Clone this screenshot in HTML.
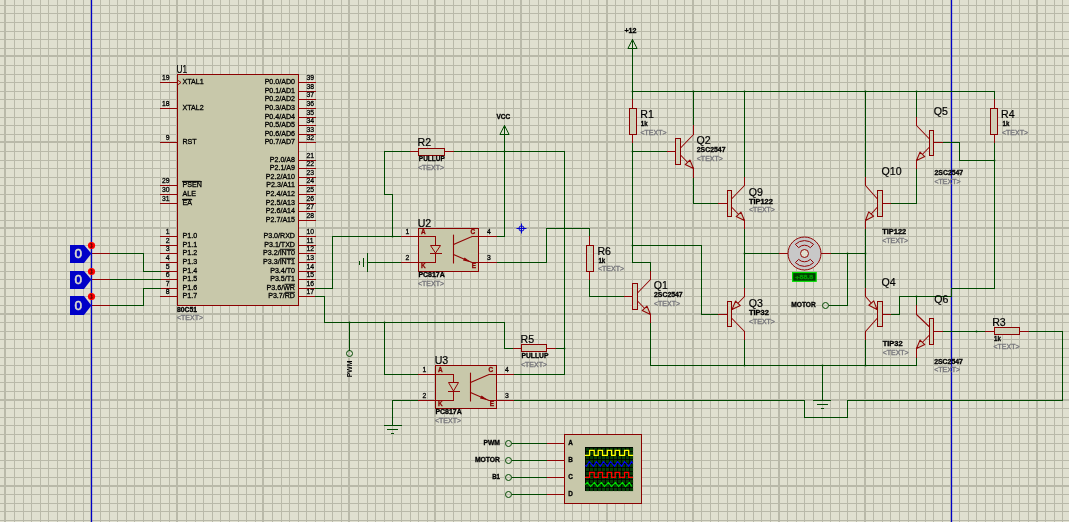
<!DOCTYPE html>
<html><head><meta charset="utf-8"><title>Schematic</title>
<style>html,body{margin:0;padding:0;background:#E0E0D0;overflow:hidden}svg{display:block}text{font-family:"Liberation Sans", Arial, sans-serif}</style>
</head><body>
<svg width="1069" height="522" viewBox="0 0 1069 522" font-family='"Liberation Sans", Arial, sans-serif'>
<defs><filter id="nf" x="0" y="0" width="100%" height="100%" filterUnits="userSpaceOnUse" color-interpolation-filters="sRGB"><feOffset dx="0" dy="0"/></filter></defs><g filter="url(#nf)">
<g shape-rendering="crispEdges">
<rect x="4" y="0" width="2" height="522" fill="#B9B9A9"/>
<rect x="14" y="0" width="1" height="522" fill="#B9B9A9"/>
<rect x="23" y="0" width="1" height="522" fill="#B9B9A9"/>
<rect x="31" y="0" width="1" height="522" fill="#B9B9A9"/>
<rect x="40" y="0" width="1" height="522" fill="#B9B9A9"/>
<rect x="48" y="0" width="1" height="522" fill="#B9B9A9"/>
<rect x="57" y="0" width="1" height="522" fill="#B9B9A9"/>
<rect x="66" y="0" width="1" height="522" fill="#B9B9A9"/>
<rect x="74" y="0" width="1" height="522" fill="#B9B9A9"/>
<rect x="83" y="0" width="1" height="522" fill="#B9B9A9"/>
<rect x="90" y="0" width="2" height="522" fill="#B9B9A9"/>
<rect x="100" y="0" width="1" height="522" fill="#B9B9A9"/>
<rect x="109" y="0" width="1" height="522" fill="#B9B9A9"/>
<rect x="117" y="0" width="1" height="522" fill="#B9B9A9"/>
<rect x="126" y="0" width="1" height="522" fill="#B9B9A9"/>
<rect x="134" y="0" width="1" height="522" fill="#B9B9A9"/>
<rect x="143" y="0" width="1" height="522" fill="#B9B9A9"/>
<rect x="152" y="0" width="1" height="522" fill="#B9B9A9"/>
<rect x="160" y="0" width="1" height="522" fill="#B9B9A9"/>
<rect x="169" y="0" width="1" height="522" fill="#B9B9A9"/>
<rect x="176" y="0" width="2" height="522" fill="#B9B9A9"/>
<rect x="186" y="0" width="1" height="522" fill="#B9B9A9"/>
<rect x="195" y="0" width="1" height="522" fill="#B9B9A9"/>
<rect x="203" y="0" width="1" height="522" fill="#B9B9A9"/>
<rect x="212" y="0" width="1" height="522" fill="#B9B9A9"/>
<rect x="220" y="0" width="1" height="522" fill="#B9B9A9"/>
<rect x="229" y="0" width="1" height="522" fill="#B9B9A9"/>
<rect x="238" y="0" width="1" height="522" fill="#B9B9A9"/>
<rect x="246" y="0" width="1" height="522" fill="#B9B9A9"/>
<rect x="255" y="0" width="1" height="522" fill="#B9B9A9"/>
<rect x="262" y="0" width="2" height="522" fill="#B9B9A9"/>
<rect x="272" y="0" width="1" height="522" fill="#B9B9A9"/>
<rect x="281" y="0" width="1" height="522" fill="#B9B9A9"/>
<rect x="289" y="0" width="1" height="522" fill="#B9B9A9"/>
<rect x="298" y="0" width="1" height="522" fill="#B9B9A9"/>
<rect x="306" y="0" width="1" height="522" fill="#B9B9A9"/>
<rect x="315" y="0" width="1" height="522" fill="#B9B9A9"/>
<rect x="324" y="0" width="1" height="522" fill="#B9B9A9"/>
<rect x="332" y="0" width="1" height="522" fill="#B9B9A9"/>
<rect x="341" y="0" width="1" height="522" fill="#B9B9A9"/>
<rect x="348" y="0" width="2" height="522" fill="#B9B9A9"/>
<rect x="358" y="0" width="1" height="522" fill="#B9B9A9"/>
<rect x="367" y="0" width="1" height="522" fill="#B9B9A9"/>
<rect x="375" y="0" width="1" height="522" fill="#B9B9A9"/>
<rect x="384" y="0" width="1" height="522" fill="#B9B9A9"/>
<rect x="392" y="0" width="1" height="522" fill="#B9B9A9"/>
<rect x="401" y="0" width="1" height="522" fill="#B9B9A9"/>
<rect x="410" y="0" width="1" height="522" fill="#B9B9A9"/>
<rect x="418" y="0" width="1" height="522" fill="#B9B9A9"/>
<rect x="427" y="0" width="1" height="522" fill="#B9B9A9"/>
<rect x="434" y="0" width="2" height="522" fill="#B9B9A9"/>
<rect x="444" y="0" width="1" height="522" fill="#B9B9A9"/>
<rect x="453" y="0" width="1" height="522" fill="#B9B9A9"/>
<rect x="461" y="0" width="1" height="522" fill="#B9B9A9"/>
<rect x="470" y="0" width="1" height="522" fill="#B9B9A9"/>
<rect x="478" y="0" width="1" height="522" fill="#B9B9A9"/>
<rect x="487" y="0" width="1" height="522" fill="#B9B9A9"/>
<rect x="496" y="0" width="1" height="522" fill="#B9B9A9"/>
<rect x="504" y="0" width="1" height="522" fill="#B9B9A9"/>
<rect x="513" y="0" width="1" height="522" fill="#B9B9A9"/>
<rect x="520" y="0" width="2" height="522" fill="#B9B9A9"/>
<rect x="529" y="0" width="1" height="522" fill="#B9B9A9"/>
<rect x="538" y="0" width="1" height="522" fill="#B9B9A9"/>
<rect x="546" y="0" width="1" height="522" fill="#B9B9A9"/>
<rect x="555" y="0" width="1" height="522" fill="#B9B9A9"/>
<rect x="564" y="0" width="1" height="522" fill="#B9B9A9"/>
<rect x="572" y="0" width="1" height="522" fill="#B9B9A9"/>
<rect x="581" y="0" width="1" height="522" fill="#B9B9A9"/>
<rect x="589" y="0" width="1" height="522" fill="#B9B9A9"/>
<rect x="598" y="0" width="1" height="522" fill="#B9B9A9"/>
<rect x="606" y="0" width="2" height="522" fill="#B9B9A9"/>
<rect x="615" y="0" width="1" height="522" fill="#B9B9A9"/>
<rect x="624" y="0" width="1" height="522" fill="#B9B9A9"/>
<rect x="632" y="0" width="1" height="522" fill="#B9B9A9"/>
<rect x="641" y="0" width="1" height="522" fill="#B9B9A9"/>
<rect x="650" y="0" width="1" height="522" fill="#B9B9A9"/>
<rect x="658" y="0" width="1" height="522" fill="#B9B9A9"/>
<rect x="667" y="0" width="1" height="522" fill="#B9B9A9"/>
<rect x="675" y="0" width="1" height="522" fill="#B9B9A9"/>
<rect x="684" y="0" width="1" height="522" fill="#B9B9A9"/>
<rect x="692" y="0" width="2" height="522" fill="#B9B9A9"/>
<rect x="701" y="0" width="1" height="522" fill="#B9B9A9"/>
<rect x="710" y="0" width="1" height="522" fill="#B9B9A9"/>
<rect x="718" y="0" width="1" height="522" fill="#B9B9A9"/>
<rect x="727" y="0" width="1" height="522" fill="#B9B9A9"/>
<rect x="736" y="0" width="1" height="522" fill="#B9B9A9"/>
<rect x="744" y="0" width="1" height="522" fill="#B9B9A9"/>
<rect x="753" y="0" width="1" height="522" fill="#B9B9A9"/>
<rect x="761" y="0" width="1" height="522" fill="#B9B9A9"/>
<rect x="770" y="0" width="1" height="522" fill="#B9B9A9"/>
<rect x="778" y="0" width="2" height="522" fill="#B9B9A9"/>
<rect x="787" y="0" width="1" height="522" fill="#B9B9A9"/>
<rect x="796" y="0" width="1" height="522" fill="#B9B9A9"/>
<rect x="804" y="0" width="1" height="522" fill="#B9B9A9"/>
<rect x="813" y="0" width="1" height="522" fill="#B9B9A9"/>
<rect x="822" y="0" width="1" height="522" fill="#B9B9A9"/>
<rect x="830" y="0" width="1" height="522" fill="#B9B9A9"/>
<rect x="839" y="0" width="1" height="522" fill="#B9B9A9"/>
<rect x="847" y="0" width="1" height="522" fill="#B9B9A9"/>
<rect x="856" y="0" width="1" height="522" fill="#B9B9A9"/>
<rect x="864" y="0" width="2" height="522" fill="#B9B9A9"/>
<rect x="873" y="0" width="1" height="522" fill="#B9B9A9"/>
<rect x="882" y="0" width="1" height="522" fill="#B9B9A9"/>
<rect x="890" y="0" width="1" height="522" fill="#B9B9A9"/>
<rect x="899" y="0" width="1" height="522" fill="#B9B9A9"/>
<rect x="908" y="0" width="1" height="522" fill="#B9B9A9"/>
<rect x="916" y="0" width="1" height="522" fill="#B9B9A9"/>
<rect x="925" y="0" width="1" height="522" fill="#B9B9A9"/>
<rect x="933" y="0" width="1" height="522" fill="#B9B9A9"/>
<rect x="942" y="0" width="1" height="522" fill="#B9B9A9"/>
<rect x="950" y="0" width="2" height="522" fill="#B9B9A9"/>
<rect x="959" y="0" width="1" height="522" fill="#B9B9A9"/>
<rect x="968" y="0" width="1" height="522" fill="#B9B9A9"/>
<rect x="976" y="0" width="1" height="522" fill="#B9B9A9"/>
<rect x="985" y="0" width="1" height="522" fill="#B9B9A9"/>
<rect x="994" y="0" width="1" height="522" fill="#B9B9A9"/>
<rect x="1002" y="0" width="1" height="522" fill="#B9B9A9"/>
<rect x="1011" y="0" width="1" height="522" fill="#B9B9A9"/>
<rect x="1019" y="0" width="1" height="522" fill="#B9B9A9"/>
<rect x="1028" y="0" width="1" height="522" fill="#B9B9A9"/>
<rect x="1036" y="0" width="2" height="522" fill="#B9B9A9"/>
<rect x="1045" y="0" width="1" height="522" fill="#B9B9A9"/>
<rect x="1054" y="0" width="1" height="522" fill="#B9B9A9"/>
<rect x="1062" y="0" width="1" height="522" fill="#B9B9A9"/>
<rect x="0" y="5" width="1069" height="1" fill="#B9B9A9"/>
<rect x="0" y="13" width="1069" height="1" fill="#B9B9A9"/>
<rect x="0" y="22" width="1069" height="1" fill="#B9B9A9"/>
<rect x="0" y="31" width="1069" height="1" fill="#B9B9A9"/>
<rect x="0" y="39" width="1069" height="1" fill="#B9B9A9"/>
<rect x="0" y="48" width="1069" height="1" fill="#B9B9A9"/>
<rect x="0" y="55" width="1069" height="2" fill="#B9B9A9"/>
<rect x="0" y="65" width="1069" height="1" fill="#B9B9A9"/>
<rect x="0" y="74" width="1069" height="1" fill="#B9B9A9"/>
<rect x="0" y="82" width="1069" height="1" fill="#B9B9A9"/>
<rect x="0" y="91" width="1069" height="1" fill="#B9B9A9"/>
<rect x="0" y="99" width="1069" height="1" fill="#B9B9A9"/>
<rect x="0" y="108" width="1069" height="1" fill="#B9B9A9"/>
<rect x="0" y="117" width="1069" height="1" fill="#B9B9A9"/>
<rect x="0" y="125" width="1069" height="1" fill="#B9B9A9"/>
<rect x="0" y="134" width="1069" height="1" fill="#B9B9A9"/>
<rect x="0" y="141" width="1069" height="2" fill="#B9B9A9"/>
<rect x="0" y="151" width="1069" height="1" fill="#B9B9A9"/>
<rect x="0" y="160" width="1069" height="1" fill="#B9B9A9"/>
<rect x="0" y="168" width="1069" height="1" fill="#B9B9A9"/>
<rect x="0" y="177" width="1069" height="1" fill="#B9B9A9"/>
<rect x="0" y="185" width="1069" height="1" fill="#B9B9A9"/>
<rect x="0" y="194" width="1069" height="1" fill="#B9B9A9"/>
<rect x="0" y="203" width="1069" height="1" fill="#B9B9A9"/>
<rect x="0" y="211" width="1069" height="1" fill="#B9B9A9"/>
<rect x="0" y="220" width="1069" height="1" fill="#B9B9A9"/>
<rect x="0" y="227" width="1069" height="2" fill="#B9B9A9"/>
<rect x="0" y="236" width="1069" height="1" fill="#B9B9A9"/>
<rect x="0" y="245" width="1069" height="1" fill="#B9B9A9"/>
<rect x="0" y="253" width="1069" height="1" fill="#B9B9A9"/>
<rect x="0" y="262" width="1069" height="1" fill="#B9B9A9"/>
<rect x="0" y="271" width="1069" height="1" fill="#B9B9A9"/>
<rect x="0" y="279" width="1069" height="1" fill="#B9B9A9"/>
<rect x="0" y="288" width="1069" height="1" fill="#B9B9A9"/>
<rect x="0" y="296" width="1069" height="1" fill="#B9B9A9"/>
<rect x="0" y="305" width="1069" height="1" fill="#B9B9A9"/>
<rect x="0" y="313" width="1069" height="2" fill="#B9B9A9"/>
<rect x="0" y="322" width="1069" height="1" fill="#B9B9A9"/>
<rect x="0" y="331" width="1069" height="1" fill="#B9B9A9"/>
<rect x="0" y="339" width="1069" height="1" fill="#B9B9A9"/>
<rect x="0" y="348" width="1069" height="1" fill="#B9B9A9"/>
<rect x="0" y="357" width="1069" height="1" fill="#B9B9A9"/>
<rect x="0" y="365" width="1069" height="1" fill="#B9B9A9"/>
<rect x="0" y="374" width="1069" height="1" fill="#B9B9A9"/>
<rect x="0" y="382" width="1069" height="1" fill="#B9B9A9"/>
<rect x="0" y="391" width="1069" height="1" fill="#B9B9A9"/>
<rect x="0" y="399" width="1069" height="2" fill="#B9B9A9"/>
<rect x="0" y="408" width="1069" height="1" fill="#B9B9A9"/>
<rect x="0" y="417" width="1069" height="1" fill="#B9B9A9"/>
<rect x="0" y="425" width="1069" height="1" fill="#B9B9A9"/>
<rect x="0" y="434" width="1069" height="1" fill="#B9B9A9"/>
<rect x="0" y="443" width="1069" height="1" fill="#B9B9A9"/>
<rect x="0" y="451" width="1069" height="1" fill="#B9B9A9"/>
<rect x="0" y="460" width="1069" height="1" fill="#B9B9A9"/>
<rect x="0" y="468" width="1069" height="1" fill="#B9B9A9"/>
<rect x="0" y="477" width="1069" height="1" fill="#B9B9A9"/>
<rect x="0" y="485" width="1069" height="2" fill="#B9B9A9"/>
<rect x="0" y="494" width="1069" height="1" fill="#B9B9A9"/>
<rect x="0" y="503" width="1069" height="1" fill="#B9B9A9"/>
<rect x="0" y="511" width="1069" height="1" fill="#B9B9A9"/>
<rect x="0" y="520" width="1069" height="1" fill="#B9B9A9"/>
</g>
<rect x="90.9" y="0" width="1.25" height="522" fill="#0000C8"/>
<rect x="950.9" y="0" width="1.25" height="522" fill="#0000C8"/>
<rect x="177.5" y="74.5" width="121" height="231" fill="#C8C8AA" stroke="#8A0000" stroke-width="1" shape-rendering="crispEdges"/>
<rect x="160" y="82" width="18" height="1" fill="#900404"/>
<text x="169.5" y="79.8" font-size="6.8" font-weight="normal" fill="#000000" stroke="#000000" stroke-width="0.3" text-anchor="end">19</text>
<text x="182.5" y="84.3" font-size="7.1" font-weight="normal" fill="#000000" stroke="#000000" stroke-width="0.3" text-anchor="start">XTAL1</text>
<rect x="160" y="108" width="18" height="1" fill="#900404"/>
<text x="169.5" y="105.8" font-size="6.8" font-weight="normal" fill="#000000" stroke="#000000" stroke-width="0.3" text-anchor="end">18</text>
<text x="182.5" y="110.3" font-size="7.1" font-weight="normal" fill="#000000" stroke="#000000" stroke-width="0.3" text-anchor="start">XTAL2</text>
<rect x="160" y="142" width="18" height="1" fill="#900404"/>
<text x="169.5" y="139.8" font-size="6.8" font-weight="normal" fill="#000000" stroke="#000000" stroke-width="0.3" text-anchor="end">9</text>
<text x="182.5" y="144.3" font-size="7.1" font-weight="normal" fill="#000000" stroke="#000000" stroke-width="0.3" text-anchor="start">RST</text>
<rect x="160" y="185" width="18" height="1" fill="#900404"/>
<text x="169.5" y="182.8" font-size="6.8" font-weight="normal" fill="#000000" stroke="#000000" stroke-width="0.3" text-anchor="end">29</text>
<text x="182.5" y="187.3" font-size="7.1" font-weight="normal" fill="#000000" stroke="#000000" stroke-width="0.3" text-anchor="start" text-decoration="overline">PSEN</text>
<rect x="182.5" y="180.8" width="18" height="0.9" fill="#000000"/>
<rect x="160" y="194" width="18" height="1" fill="#900404"/>
<text x="169.5" y="191.8" font-size="6.8" font-weight="normal" fill="#000000" stroke="#000000" stroke-width="0.3" text-anchor="end">30</text>
<text x="182.5" y="196.3" font-size="7.1" font-weight="normal" fill="#000000" stroke="#000000" stroke-width="0.3" text-anchor="start">ALE</text>
<rect x="160" y="203" width="18" height="1" fill="#900404"/>
<text x="169.5" y="200.8" font-size="6.8" font-weight="normal" fill="#000000" stroke="#000000" stroke-width="0.3" text-anchor="end">31</text>
<text x="182.5" y="205.3" font-size="7.1" font-weight="normal" fill="#000000" stroke="#000000" stroke-width="0.3" text-anchor="start" text-decoration="overline">EA</text>
<rect x="182.5" y="198.8" width="9" height="0.9" fill="#000000"/>
<rect x="160" y="236" width="18" height="1" fill="#900404"/>
<text x="169.5" y="233.8" font-size="6.8" font-weight="normal" fill="#000000" stroke="#000000" stroke-width="0.3" text-anchor="end">1</text>
<text x="182.5" y="238.3" font-size="7.1" font-weight="normal" fill="#000000" stroke="#000000" stroke-width="0.3" text-anchor="start">P1.0</text>
<rect x="160" y="245" width="18" height="1" fill="#900404"/>
<text x="169.5" y="242.8" font-size="6.8" font-weight="normal" fill="#000000" stroke="#000000" stroke-width="0.3" text-anchor="end">2</text>
<text x="182.5" y="247.3" font-size="7.1" font-weight="normal" fill="#000000" stroke="#000000" stroke-width="0.3" text-anchor="start">P1.1</text>
<rect x="160" y="253" width="18" height="1" fill="#900404"/>
<text x="169.5" y="250.8" font-size="6.8" font-weight="normal" fill="#000000" stroke="#000000" stroke-width="0.3" text-anchor="end">3</text>
<text x="182.5" y="255.3" font-size="7.1" font-weight="normal" fill="#000000" stroke="#000000" stroke-width="0.3" text-anchor="start">P1.2</text>
<rect x="160" y="262" width="18" height="1" fill="#900404"/>
<text x="169.5" y="259.8" font-size="6.8" font-weight="normal" fill="#000000" stroke="#000000" stroke-width="0.3" text-anchor="end">4</text>
<text x="182.5" y="264.3" font-size="7.1" font-weight="normal" fill="#000000" stroke="#000000" stroke-width="0.3" text-anchor="start">P1.3</text>
<rect x="160" y="271" width="18" height="1" fill="#900404"/>
<text x="169.5" y="268.8" font-size="6.8" font-weight="normal" fill="#000000" stroke="#000000" stroke-width="0.3" text-anchor="end">5</text>
<text x="182.5" y="273.3" font-size="7.1" font-weight="normal" fill="#000000" stroke="#000000" stroke-width="0.3" text-anchor="start">P1.4</text>
<rect x="160" y="279" width="18" height="1" fill="#900404"/>
<text x="169.5" y="276.8" font-size="6.8" font-weight="normal" fill="#000000" stroke="#000000" stroke-width="0.3" text-anchor="end">6</text>
<text x="182.5" y="281.3" font-size="7.1" font-weight="normal" fill="#000000" stroke="#000000" stroke-width="0.3" text-anchor="start">P1.5</text>
<rect x="160" y="288" width="18" height="1" fill="#900404"/>
<text x="169.5" y="285.8" font-size="6.8" font-weight="normal" fill="#000000" stroke="#000000" stroke-width="0.3" text-anchor="end">7</text>
<text x="182.5" y="290.3" font-size="7.1" font-weight="normal" fill="#000000" stroke="#000000" stroke-width="0.3" text-anchor="start">P1.6</text>
<rect x="160" y="296" width="18" height="1" fill="#900404"/>
<text x="169.5" y="293.8" font-size="6.8" font-weight="normal" fill="#000000" stroke="#000000" stroke-width="0.3" text-anchor="end">8</text>
<text x="182.5" y="298.3" font-size="7.1" font-weight="normal" fill="#000000" stroke="#000000" stroke-width="0.3" text-anchor="start">P1.7</text>
<polygon points="177.5,80.0 181,82.5 177.5,85.0" fill="#C8C8AA" stroke="#8A0000" stroke-width="0.9"/>
<rect x="298" y="82" width="18" height="1" fill="#900404"/>
<text x="306.5" y="79.8" font-size="6.8" font-weight="normal" fill="#000000" stroke="#000000" stroke-width="0.3" text-anchor="start">39</text>
<text x="295" y="84.3" font-size="7.1" font-weight="normal" fill="#000000" stroke="#000000" stroke-width="0.3" text-anchor="end">P0.0/AD0</text>
<rect x="298" y="91" width="18" height="1" fill="#900404"/>
<text x="306.5" y="88.8" font-size="6.8" font-weight="normal" fill="#000000" stroke="#000000" stroke-width="0.3" text-anchor="start">38</text>
<text x="295" y="93.3" font-size="7.1" font-weight="normal" fill="#000000" stroke="#000000" stroke-width="0.3" text-anchor="end">P0.1/AD1</text>
<rect x="298" y="99" width="18" height="1" fill="#900404"/>
<text x="306.5" y="96.8" font-size="6.8" font-weight="normal" fill="#000000" stroke="#000000" stroke-width="0.3" text-anchor="start">37</text>
<text x="295" y="101.3" font-size="7.1" font-weight="normal" fill="#000000" stroke="#000000" stroke-width="0.3" text-anchor="end">P0.2/AD2</text>
<rect x="298" y="108" width="18" height="1" fill="#900404"/>
<text x="306.5" y="105.8" font-size="6.8" font-weight="normal" fill="#000000" stroke="#000000" stroke-width="0.3" text-anchor="start">36</text>
<text x="295" y="110.3" font-size="7.1" font-weight="normal" fill="#000000" stroke="#000000" stroke-width="0.3" text-anchor="end">P0.3/AD3</text>
<rect x="298" y="117" width="18" height="1" fill="#900404"/>
<text x="306.5" y="114.8" font-size="6.8" font-weight="normal" fill="#000000" stroke="#000000" stroke-width="0.3" text-anchor="start">35</text>
<text x="295" y="119.3" font-size="7.1" font-weight="normal" fill="#000000" stroke="#000000" stroke-width="0.3" text-anchor="end">P0.4/AD4</text>
<rect x="298" y="125" width="18" height="1" fill="#900404"/>
<text x="306.5" y="122.8" font-size="6.8" font-weight="normal" fill="#000000" stroke="#000000" stroke-width="0.3" text-anchor="start">34</text>
<text x="295" y="127.3" font-size="7.1" font-weight="normal" fill="#000000" stroke="#000000" stroke-width="0.3" text-anchor="end">P0.5/AD5</text>
<rect x="298" y="134" width="18" height="1" fill="#900404"/>
<text x="306.5" y="131.8" font-size="6.8" font-weight="normal" fill="#000000" stroke="#000000" stroke-width="0.3" text-anchor="start">33</text>
<text x="295" y="136.3" font-size="7.1" font-weight="normal" fill="#000000" stroke="#000000" stroke-width="0.3" text-anchor="end">P0.6/AD6</text>
<rect x="298" y="142" width="18" height="1" fill="#900404"/>
<text x="306.5" y="139.8" font-size="6.8" font-weight="normal" fill="#000000" stroke="#000000" stroke-width="0.3" text-anchor="start">32</text>
<text x="295" y="144.3" font-size="7.1" font-weight="normal" fill="#000000" stroke="#000000" stroke-width="0.3" text-anchor="end">P0.7/AD7</text>
<rect x="298" y="160" width="18" height="1" fill="#900404"/>
<text x="306.5" y="157.8" font-size="6.8" font-weight="normal" fill="#000000" stroke="#000000" stroke-width="0.3" text-anchor="start">21</text>
<text x="295" y="162.3" font-size="7.1" font-weight="normal" fill="#000000" stroke="#000000" stroke-width="0.3" text-anchor="end">P2.0/A8</text>
<rect x="298" y="168" width="18" height="1" fill="#900404"/>
<text x="306.5" y="165.8" font-size="6.8" font-weight="normal" fill="#000000" stroke="#000000" stroke-width="0.3" text-anchor="start">22</text>
<text x="295" y="170.3" font-size="7.1" font-weight="normal" fill="#000000" stroke="#000000" stroke-width="0.3" text-anchor="end">P2.1/A9</text>
<rect x="298" y="177" width="18" height="1" fill="#900404"/>
<text x="306.5" y="174.8" font-size="6.8" font-weight="normal" fill="#000000" stroke="#000000" stroke-width="0.3" text-anchor="start">23</text>
<text x="295" y="179.3" font-size="7.1" font-weight="normal" fill="#000000" stroke="#000000" stroke-width="0.3" text-anchor="end">P2.2/A10</text>
<rect x="298" y="185" width="18" height="1" fill="#900404"/>
<text x="306.5" y="182.8" font-size="6.8" font-weight="normal" fill="#000000" stroke="#000000" stroke-width="0.3" text-anchor="start">24</text>
<text x="295" y="187.3" font-size="7.1" font-weight="normal" fill="#000000" stroke="#000000" stroke-width="0.3" text-anchor="end">P2.3/A11</text>
<rect x="298" y="194" width="18" height="1" fill="#900404"/>
<text x="306.5" y="191.8" font-size="6.8" font-weight="normal" fill="#000000" stroke="#000000" stroke-width="0.3" text-anchor="start">25</text>
<text x="295" y="196.3" font-size="7.1" font-weight="normal" fill="#000000" stroke="#000000" stroke-width="0.3" text-anchor="end">P2.4/A12</text>
<rect x="298" y="203" width="18" height="1" fill="#900404"/>
<text x="306.5" y="200.8" font-size="6.8" font-weight="normal" fill="#000000" stroke="#000000" stroke-width="0.3" text-anchor="start">26</text>
<text x="295" y="205.3" font-size="7.1" font-weight="normal" fill="#000000" stroke="#000000" stroke-width="0.3" text-anchor="end">P2.5/A13</text>
<rect x="298" y="211" width="18" height="1" fill="#900404"/>
<text x="306.5" y="208.8" font-size="6.8" font-weight="normal" fill="#000000" stroke="#000000" stroke-width="0.3" text-anchor="start">27</text>
<text x="295" y="213.3" font-size="7.1" font-weight="normal" fill="#000000" stroke="#000000" stroke-width="0.3" text-anchor="end">P2.6/A14</text>
<rect x="298" y="220" width="18" height="1" fill="#900404"/>
<text x="306.5" y="217.8" font-size="6.8" font-weight="normal" fill="#000000" stroke="#000000" stroke-width="0.3" text-anchor="start">28</text>
<text x="295" y="222.3" font-size="7.1" font-weight="normal" fill="#000000" stroke="#000000" stroke-width="0.3" text-anchor="end">P2.7/A15</text>
<rect x="298" y="236" width="18" height="1" fill="#900404"/>
<text x="306.5" y="233.8" font-size="6.8" font-weight="normal" fill="#000000" stroke="#000000" stroke-width="0.3" text-anchor="start">10</text>
<text x="295" y="238.3" font-size="7.1" font-weight="normal" fill="#000000" stroke="#000000" stroke-width="0.3" text-anchor="end">P3.0/RXD</text>
<rect x="298" y="245" width="18" height="1" fill="#900404"/>
<text x="306.5" y="242.8" font-size="6.8" font-weight="normal" fill="#000000" stroke="#000000" stroke-width="0.3" text-anchor="start">11</text>
<text x="295" y="247.3" font-size="7.1" font-weight="normal" fill="#000000" stroke="#000000" stroke-width="0.3" text-anchor="end">P3.1/TXD</text>
<rect x="298" y="253" width="18" height="1" fill="#900404"/>
<text x="306.5" y="250.8" font-size="6.8" font-weight="normal" fill="#000000" stroke="#000000" stroke-width="0.3" text-anchor="start">12</text>
<text x="295" y="255.3" font-size="7.1" font-weight="normal" fill="#000000" stroke="#000000" stroke-width="0.3" text-anchor="end">P3.2/INT0</text>
<rect x="280" y="248.8" width="15" height="0.9" fill="#000000"/>
<rect x="298" y="262" width="18" height="1" fill="#900404"/>
<text x="306.5" y="259.8" font-size="6.8" font-weight="normal" fill="#000000" stroke="#000000" stroke-width="0.3" text-anchor="start">13</text>
<text x="295" y="264.3" font-size="7.1" font-weight="normal" fill="#000000" stroke="#000000" stroke-width="0.3" text-anchor="end">P3.3/INT1</text>
<rect x="280" y="257.8" width="15" height="0.9" fill="#000000"/>
<rect x="298" y="271" width="18" height="1" fill="#900404"/>
<text x="306.5" y="268.8" font-size="6.8" font-weight="normal" fill="#000000" stroke="#000000" stroke-width="0.3" text-anchor="start">14</text>
<text x="295" y="273.3" font-size="7.1" font-weight="normal" fill="#000000" stroke="#000000" stroke-width="0.3" text-anchor="end">P3.4/T0</text>
<rect x="298" y="279" width="18" height="1" fill="#900404"/>
<text x="306.5" y="276.8" font-size="6.8" font-weight="normal" fill="#000000" stroke="#000000" stroke-width="0.3" text-anchor="start">15</text>
<text x="295" y="281.3" font-size="7.1" font-weight="normal" fill="#000000" stroke="#000000" stroke-width="0.3" text-anchor="end">P3.5/T1</text>
<rect x="298" y="288" width="18" height="1" fill="#900404"/>
<text x="306.5" y="285.8" font-size="6.8" font-weight="normal" fill="#000000" stroke="#000000" stroke-width="0.3" text-anchor="start">16</text>
<text x="295" y="290.3" font-size="7.1" font-weight="normal" fill="#000000" stroke="#000000" stroke-width="0.3" text-anchor="end">P3.6/WR</text>
<rect x="284.5" y="283.8" width="10.5" height="0.9" fill="#000000"/>
<rect x="298" y="296" width="18" height="1" fill="#900404"/>
<text x="306.5" y="293.8" font-size="6.8" font-weight="normal" fill="#000000" stroke="#000000" stroke-width="0.3" text-anchor="start">17</text>
<text x="295" y="298.3" font-size="7.1" font-weight="normal" fill="#000000" stroke="#000000" stroke-width="0.3" text-anchor="end">P3.7/RD</text>
<rect x="285" y="291.8" width="10" height="0.9" fill="#000000"/>
<text x="176.6" y="72.6" font-size="10.6" font-weight="normal" fill="#000000" stroke="#000000" stroke-width="0.2" text-anchor="start" textLength="10.6" lengthAdjust="spacingAndGlyphs">U1</text>
<text x="177" y="311.8" font-size="6.4" font-weight="bold" fill="#000000" stroke="#000000" stroke-width="0.3" text-anchor="start" textLength="20" lengthAdjust="spacingAndGlyphs">80C51</text>
<text x="177" y="319.9" font-size="6.4" font-weight="normal" fill="#74747A" stroke="#74747A" stroke-width="0.3" text-anchor="start" textLength="26" lengthAdjust="spacingAndGlyphs">&lt;TEXT&gt;</text>
<polygon points="70,245 84,245 91.4,253.5 84,263 70,263" fill="#0000C8"/>
<text x="78.3" y="258.4" font-size="13.5" font-weight="normal" fill="#E0E0D0" stroke="#E0E0D0" stroke-width="0.5" text-anchor="middle">0</text>
<rect x="92" y="253" width="18" height="1" fill="#900404"/>
<rect x="110" y="253" width="34" height="1" fill="#004800"/>
<rect x="143" y="253" width="1" height="19" fill="#004800"/>
<rect x="143" y="271" width="18" height="1" fill="#004800"/>
<circle cx="91.5" cy="245.5" r="3.6" fill="#FF0000"/>
<path d="M90.3,243.8 l1.6,0 l-0.2,1.6 l0.4,1.8 l-1.8,0" fill="none" stroke="#300000" stroke-width="0.9"/>
<polygon points="70,271 84,271 91.4,279.5 84,289 70,289" fill="#0000C8"/>
<text x="78.3" y="284.4" font-size="13.5" font-weight="normal" fill="#E0E0D0" stroke="#E0E0D0" stroke-width="0.5" text-anchor="middle">0</text>
<rect x="92" y="279" width="18" height="1" fill="#900404"/>
<rect x="110" y="279" width="51" height="1" fill="#004800"/>
<circle cx="91.5" cy="271.5" r="3.6" fill="#FF0000"/>
<path d="M90.3,269.8 l1.6,0 l-0.2,1.6 l0.4,1.8 l-1.8,0" fill="none" stroke="#300000" stroke-width="0.9"/>
<polygon points="70,296 84,296 91.4,305.5 84,315 70,315" fill="#0000C8"/>
<text x="78.3" y="310.4" font-size="13.5" font-weight="normal" fill="#E0E0D0" stroke="#E0E0D0" stroke-width="0.5" text-anchor="middle">0</text>
<rect x="92" y="305" width="18" height="1" fill="#900404"/>
<rect x="110" y="305" width="34" height="1" fill="#004800"/>
<rect x="143" y="288" width="1" height="18" fill="#004800"/>
<rect x="143" y="288" width="18" height="1" fill="#004800"/>
<circle cx="91.5" cy="296.5" r="3.6" fill="#FF0000"/>
<path d="M90.3,294.8 l1.6,0 l-0.2,1.6 l0.4,1.8 l-1.8,0" fill="none" stroke="#300000" stroke-width="0.9"/>
<rect x="315" y="288" width="18" height="1" fill="#004800"/>
<rect x="332" y="236" width="1" height="53" fill="#004800"/>
<rect x="332" y="236" width="70" height="1" fill="#004800"/>
<rect x="392" y="194" width="1" height="43" fill="#004800"/>
<rect x="384" y="194" width="9" height="1" fill="#004800"/>
<rect x="384" y="151" width="1" height="44" fill="#004800"/>
<rect x="384" y="151" width="27" height="1" fill="#004800"/>
<rect x="453" y="151" width="112" height="1" fill="#004800"/>
<rect x="564" y="151" width="1" height="224" fill="#004800"/>
<rect x="513" y="374" width="52" height="1" fill="#004800"/>
<rect x="504" y="134" width="1" height="103" fill="#004800"/>
<rect x="496" y="236" width="9" height="1" fill="#004800"/>
<rect x="555" y="348" width="10" height="1" fill="#004800"/>
<rect x="496" y="262" width="51" height="1" fill="#004800"/>
<rect x="546" y="228" width="1" height="35" fill="#004800"/>
<rect x="546" y="228" width="44" height="1" fill="#004800"/>
<rect x="589" y="228" width="1" height="9" fill="#004800"/>
<rect x="589" y="279" width="1" height="18" fill="#004800"/>
<rect x="589" y="296" width="36" height="1" fill="#004800"/>
<rect x="367" y="262" width="35" height="1" fill="#004800"/>
<rect x="315" y="296" width="10" height="1" fill="#004800"/>
<rect x="324" y="296" width="1" height="27" fill="#004800"/>
<rect x="324" y="322" width="181" height="1" fill="#004800"/>
<rect x="504" y="322" width="1" height="27" fill="#004800"/>
<rect x="504" y="348" width="10" height="1" fill="#004800"/>
<rect x="349" y="322" width="1" height="29" fill="#004800"/>
<rect x="384" y="322" width="1" height="53" fill="#004800"/>
<rect x="384" y="374" width="35" height="1" fill="#004800"/>
<rect x="392" y="400" width="27" height="1" fill="#004800"/>
<rect x="392" y="400" width="1" height="26" fill="#004800"/>
<rect x="513" y="400" width="292" height="1" fill="#004800"/>
<rect x="804" y="400" width="1" height="18" fill="#004800"/>
<rect x="804" y="417" width="44" height="1" fill="#004800"/>
<rect x="847" y="400" width="1" height="18" fill="#004800"/>
<rect x="847" y="400" width="216" height="1" fill="#004800"/>
<rect x="1062" y="331" width="1" height="70" fill="#004800"/>
<rect x="1028" y="331" width="35" height="1" fill="#004800"/>
<rect x="942" y="331" width="44" height="1" fill="#004800"/>
<rect x="632" y="48" width="1" height="52" fill="#004800"/>
<rect x="632" y="91" width="363" height="1" fill="#004800"/>
<rect x="994" y="91" width="1" height="9" fill="#004800"/>
<rect x="632" y="142" width="1" height="121" fill="#004800"/>
<rect x="632" y="262" width="19" height="1" fill="#004800"/>
<rect x="650" y="262" width="1" height="10" fill="#004800"/>
<rect x="632" y="151" width="36" height="1" fill="#004800"/>
<rect x="632" y="245" width="70" height="1" fill="#004800"/>
<rect x="701" y="245" width="1" height="70" fill="#004800"/>
<rect x="701" y="314" width="18" height="1" fill="#004800"/>
<rect x="693" y="91" width="1" height="35" fill="#004800"/>
<rect x="693" y="177" width="1" height="27" fill="#004800"/>
<rect x="693" y="203" width="26" height="1" fill="#004800"/>
<rect x="744" y="91" width="1" height="87" fill="#004800"/>
<rect x="744" y="228" width="1" height="61" fill="#004800"/>
<rect x="744" y="339" width="1" height="27" fill="#004800"/>
<rect x="744" y="253" width="36" height="1" fill="#004800"/>
<rect x="830" y="253" width="36" height="1" fill="#004800"/>
<rect x="847" y="253" width="1" height="53" fill="#004800"/>
<rect x="829" y="305" width="19" height="1" fill="#004800"/>
<rect x="650" y="322" width="1" height="44" fill="#004800"/>
<rect x="650" y="365" width="267" height="1" fill="#004800"/>
<rect x="916" y="357" width="1" height="9" fill="#004800"/>
<rect x="822" y="365" width="1" height="36" fill="#004800"/>
<rect x="865" y="91" width="1" height="87" fill="#004800"/>
<rect x="865" y="228" width="1" height="61" fill="#004800"/>
<rect x="865" y="339" width="1" height="27" fill="#004800"/>
<rect x="890" y="203" width="27" height="1" fill="#004800"/>
<rect x="916" y="168" width="1" height="36" fill="#004800"/>
<rect x="916" y="91" width="1" height="27" fill="#004800"/>
<rect x="942" y="142" width="18" height="1" fill="#004800"/>
<rect x="959" y="142" width="1" height="19" fill="#004800"/>
<rect x="959" y="160" width="36" height="1" fill="#004800"/>
<rect x="994" y="142" width="1" height="147" fill="#004800"/>
<rect x="951" y="288" width="44" height="1" fill="#004800"/>
<rect x="951" y="288" width="1" height="9" fill="#004800"/>
<rect x="899" y="296" width="53" height="1" fill="#004800"/>
<rect x="899" y="296" width="1" height="19" fill="#004800"/>
<rect x="890" y="314" width="10" height="1" fill="#004800"/>
<rect x="916" y="296" width="1" height="10" fill="#004800"/>
<circle cx="392.5" cy="236.5" r="0.9" fill="#004800"/>
<circle cx="504.5" cy="151.5" r="0.9" fill="#004800"/>
<circle cx="564.5" cy="348.5" r="0.9" fill="#004800"/>
<circle cx="349.5" cy="322.5" r="0.9" fill="#004800"/>
<circle cx="384.5" cy="322.5" r="0.9" fill="#004800"/>
<circle cx="632.5" cy="91.5" r="0.9" fill="#004800"/>
<circle cx="632.5" cy="151.5" r="0.9" fill="#004800"/>
<circle cx="632.5" cy="245.5" r="0.9" fill="#004800"/>
<circle cx="693.5" cy="91.5" r="0.9" fill="#004800"/>
<circle cx="744.5" cy="91.5" r="0.9" fill="#004800"/>
<circle cx="865.5" cy="91.5" r="0.9" fill="#004800"/>
<circle cx="916.5" cy="91.5" r="0.9" fill="#004800"/>
<circle cx="744.5" cy="253.5" r="0.9" fill="#004800"/>
<circle cx="847.5" cy="253.5" r="0.9" fill="#004800"/>
<circle cx="865.5" cy="253.5" r="0.9" fill="#004800"/>
<circle cx="994.5" cy="160.5" r="0.9" fill="#004800"/>
<circle cx="916.5" cy="296.5" r="0.9" fill="#004800"/>
<circle cx="744.5" cy="365.5" r="0.9" fill="#004800"/>
<circle cx="822.5" cy="365.5" r="0.9" fill="#004800"/>
<circle cx="865.5" cy="365.5" r="0.9" fill="#004800"/>
<circle cx="976.5" cy="331.5" r="0.9" fill="#004800"/>
<rect x="384" y="425" width="18" height="1" fill="#004800"/>
<rect x="387" y="429" width="11" height="1" fill="#004800"/>
<rect x="391" y="433" width="3" height="1" fill="#004800"/>
<rect x="813" y="400" width="18" height="1" fill="#004800"/>
<rect x="817" y="404" width="11" height="1" fill="#004800"/>
<rect x="821" y="408" width="3" height="1" fill="#004800"/>
<rect x="367" y="253" width="1" height="19" fill="#004800"/>
<rect x="363" y="258" width="1" height="9" fill="#004800"/>
<rect x="359" y="261" width="1" height="4" fill="#004800"/>
<polygon points="504.5,125.5 499.9,134.5 509.1,134.5" fill="none" stroke="#004800" stroke-width="1"/>
<rect x="504" y="125" width="1" height="10" fill="#004800"/>
<text x="503.4" y="118.9" font-size="6.4" font-weight="bold" fill="#000000" stroke="#000000" stroke-width="0.3" text-anchor="middle" textLength="13.7" lengthAdjust="spacingAndGlyphs">VCC</text>
<polygon points="632.5,39.5 627.9,48.5 637.1,48.5" fill="none" stroke="#004800" stroke-width="1"/>
<rect x="632" y="39" width="1" height="10" fill="#004800"/>
<text x="630.4" y="32.9" font-size="6.4" font-weight="bold" fill="#000000" stroke="#000000" stroke-width="0.3" text-anchor="middle" textLength="12" lengthAdjust="spacingAndGlyphs">+12</text>
<rect x="410" y="151" width="9" height="1" fill="#900404"/>
<rect x="444" y="151" width="10" height="1" fill="#900404"/>
<rect x="418.5" y="148.5" width="26" height="7" fill="#D0D0B8" stroke="#8A0000" stroke-width="1" shape-rendering="crispEdges"/>
<text x="417.6" y="146" font-size="10.6" font-weight="normal" fill="#000000" stroke="#000000" stroke-width="0.2" text-anchor="start">R2</text>
<text x="418.8" y="160.8" font-size="6.4" font-weight="bold" fill="#000000" stroke="#000000" stroke-width="0.3" text-anchor="start" textLength="26" lengthAdjust="spacingAndGlyphs">PULLUP</text>
<text x="418" y="169.8" font-size="6.4" font-weight="normal" fill="#74747A" stroke="#74747A" stroke-width="0.3" text-anchor="start" textLength="26" lengthAdjust="spacingAndGlyphs">&lt;TEXT&gt;</text>
<rect x="513" y="348" width="9" height="1" fill="#900404"/>
<rect x="546" y="348" width="10" height="1" fill="#900404"/>
<rect x="521.5" y="344.5" width="25" height="7" fill="#D0D0B8" stroke="#8A0000" stroke-width="1" shape-rendering="crispEdges"/>
<text x="520.6" y="343.1" font-size="10.6" font-weight="normal" fill="#000000" stroke="#000000" stroke-width="0.2" text-anchor="start">R5</text>
<text x="521.5" y="358.2" font-size="6.4" font-weight="bold" fill="#000000" stroke="#000000" stroke-width="0.3" text-anchor="start" textLength="27" lengthAdjust="spacingAndGlyphs">PULLUP</text>
<text x="521" y="367" font-size="6.4" font-weight="normal" fill="#74747A" stroke="#74747A" stroke-width="0.3" text-anchor="start" textLength="26" lengthAdjust="spacingAndGlyphs">&lt;TEXT&gt;</text>
<rect x="985" y="331" width="10" height="1" fill="#900404"/>
<rect x="1019" y="331" width="10" height="1" fill="#900404"/>
<rect x="994.5" y="327.5" width="25" height="7" fill="#D0D0B8" stroke="#8A0000" stroke-width="1" shape-rendering="crispEdges"/>
<text x="992.2" y="326.2" font-size="10.6" font-weight="normal" fill="#000000" stroke="#000000" stroke-width="0.2" text-anchor="start">R3</text>
<text x="994" y="340.8" font-size="6.4" font-weight="bold" fill="#000000" stroke="#000000" stroke-width="0.3" text-anchor="start" textLength="6.8" lengthAdjust="spacingAndGlyphs">1k</text>
<text x="993.5" y="348.8" font-size="6.4" font-weight="normal" fill="#74747A" stroke="#74747A" stroke-width="0.3" text-anchor="start" textLength="26" lengthAdjust="spacingAndGlyphs">&lt;TEXT&gt;</text>
<rect x="632" y="99" width="1" height="10" fill="#900404"/>
<rect x="632" y="134" width="1" height="9" fill="#900404"/>
<rect x="629.5" y="108.5" width="7" height="26" fill="#D0D0B8" stroke="#8A0000" stroke-width="1" shape-rendering="crispEdges"/>
<text x="640.3" y="117.8" font-size="10.6" font-weight="normal" fill="#000000" stroke="#000000" stroke-width="0.2" text-anchor="start">R1</text>
<text x="640.8" y="125.6" font-size="6.4" font-weight="bold" fill="#000000" stroke="#000000" stroke-width="0.3" text-anchor="start" textLength="6.8" lengthAdjust="spacingAndGlyphs">1k</text>
<text x="640.5" y="134.6" font-size="6.4" font-weight="normal" fill="#74747A" stroke="#74747A" stroke-width="0.3" text-anchor="start" textLength="26" lengthAdjust="spacingAndGlyphs">&lt;TEXT&gt;</text>
<rect x="589" y="236" width="1" height="10" fill="#900404"/>
<rect x="589" y="271" width="1" height="9" fill="#900404"/>
<rect x="586.5" y="245.5" width="7" height="26" fill="#D0D0B8" stroke="#8A0000" stroke-width="1" shape-rendering="crispEdges"/>
<text x="597.4" y="254.6" font-size="10.6" font-weight="normal" fill="#000000" stroke="#000000" stroke-width="0.2" text-anchor="start">R6</text>
<text x="598.4" y="263" font-size="6.4" font-weight="bold" fill="#000000" stroke="#000000" stroke-width="0.3" text-anchor="start" textLength="6.8" lengthAdjust="spacingAndGlyphs">1k</text>
<text x="598" y="271.2" font-size="6.4" font-weight="normal" fill="#74747A" stroke="#74747A" stroke-width="0.3" text-anchor="start" textLength="26" lengthAdjust="spacingAndGlyphs">&lt;TEXT&gt;</text>
<rect x="994" y="99" width="1" height="10" fill="#900404"/>
<rect x="994" y="134" width="1" height="9" fill="#900404"/>
<rect x="990.5" y="108.5" width="7" height="26" fill="#D0D0B8" stroke="#8A0000" stroke-width="1" shape-rendering="crispEdges"/>
<text x="1001" y="118" font-size="10.6" font-weight="normal" fill="#000000" stroke="#000000" stroke-width="0.2" text-anchor="start">R4</text>
<text x="1002.6" y="125.8" font-size="6.4" font-weight="bold" fill="#000000" stroke="#000000" stroke-width="0.3" text-anchor="start" textLength="6.8" lengthAdjust="spacingAndGlyphs">1k</text>
<text x="1002" y="134.6" font-size="6.4" font-weight="normal" fill="#74747A" stroke="#74747A" stroke-width="0.3" text-anchor="start" textLength="26" lengthAdjust="spacingAndGlyphs">&lt;TEXT&gt;</text>
<rect x="418.5" y="228.5" width="60" height="43" fill="#C8C8AA" stroke="#8A0000" stroke-width="1" shape-rendering="crispEdges"/>
<rect x="401" y="236" width="18" height="1" fill="#900404"/>
<rect x="401" y="262" width="18" height="1" fill="#900404"/>
<rect x="478" y="236" width="19" height="1" fill="#900404"/>
<rect x="478" y="262" width="19" height="1" fill="#900404"/>
<rect x="418" y="236" width="18" height="1" fill="#900404"/>
<rect x="418" y="262" width="18" height="1" fill="#900404"/>
<rect x="435" y="236" width="1" height="27" fill="#900404"/>
<polygon points="430.5,245.5 440.5,245.5 435.5,253" fill="#C8C8AA" stroke="#900404" stroke-width="1"/>
<rect x="430" y="253" width="12" height="1" fill="#900404"/>
<line x1="453.5" y1="235" x2="453.5" y2="263" stroke="#900404" stroke-width="1.1" stroke-linecap="round"/>
<line x1="453.5" y1="244.5" x2="472" y2="236.5" stroke="#900404" stroke-width="1.1" stroke-linecap="round"/>
<rect x="472" y="236" width="7" height="1" fill="#900404"/>
<line x1="453.5" y1="254.5" x2="472" y2="262.5" stroke="#900404" stroke-width="1.1" stroke-linecap="round"/>
<rect x="472" y="262" width="7" height="1" fill="#900404"/>
<polygon points="471,262.2 463,260.6 464.6,257.4" fill="#900404"/>
<text x="421" y="233.8" font-size="6.4" font-weight="bold" fill="#8A0000" stroke="#8A0000" stroke-width="0.3" text-anchor="start">A</text>
<text x="421" y="267.8" font-size="6.4" font-weight="bold" fill="#8A0000" stroke="#8A0000" stroke-width="0.3" text-anchor="start">K</text>
<text x="475" y="233.8" font-size="6.4" font-weight="bold" fill="#8A0000" stroke="#8A0000" stroke-width="0.3" text-anchor="end">C</text>
<text x="476" y="267.8" font-size="6.4" font-weight="bold" fill="#8A0000" stroke="#8A0000" stroke-width="0.3" text-anchor="end">E</text>
<text x="409.4" y="234.4" font-size="6.8" font-weight="normal" fill="#000000" stroke="#000000" stroke-width="0.3" text-anchor="end">1</text>
<text x="409.4" y="260.4" font-size="6.8" font-weight="normal" fill="#000000" stroke="#000000" stroke-width="0.3" text-anchor="end">2</text>
<text x="487" y="234.4" font-size="6.8" font-weight="normal" fill="#000000" stroke="#000000" stroke-width="0.3" text-anchor="start">4</text>
<text x="487" y="260.4" font-size="6.8" font-weight="normal" fill="#000000" stroke="#000000" stroke-width="0.3" text-anchor="start">3</text>
<text x="417.7" y="227.2" font-size="10.6" font-weight="normal" fill="#000000" stroke="#000000" stroke-width="0.2" text-anchor="start">U2</text>
<text x="418.4" y="276.6" font-size="6.4" font-weight="bold" fill="#000000" stroke="#000000" stroke-width="0.3" text-anchor="start" textLength="26.4" lengthAdjust="spacingAndGlyphs">PC817A</text>
<text x="418" y="285.6" font-size="6.4" font-weight="normal" fill="#74747A" stroke="#74747A" stroke-width="0.3" text-anchor="start" textLength="26" lengthAdjust="spacingAndGlyphs">&lt;TEXT&gt;</text>
<rect x="435.5" y="365.5" width="61" height="43" fill="#C8C8AA" stroke="#8A0000" stroke-width="1" shape-rendering="crispEdges"/>
<rect x="418" y="374" width="18" height="1" fill="#900404"/>
<rect x="418" y="400" width="18" height="1" fill="#900404"/>
<rect x="496" y="374" width="18" height="1" fill="#900404"/>
<rect x="496" y="400" width="18" height="1" fill="#900404"/>
<rect x="435" y="374" width="19" height="1" fill="#900404"/>
<rect x="435" y="400" width="19" height="1" fill="#900404"/>
<rect x="453" y="374" width="1" height="27" fill="#900404"/>
<polygon points="448.5,382.5 458.5,382.5 453.5,391" fill="#C8C8AA" stroke="#900404" stroke-width="1"/>
<rect x="448" y="391" width="12" height="1" fill="#900404"/>
<line x1="470.5" y1="373" x2="470.5" y2="401" stroke="#900404" stroke-width="1.1" stroke-linecap="round"/>
<line x1="470.5" y1="382.5" x2="489" y2="374.5" stroke="#900404" stroke-width="1.1" stroke-linecap="round"/>
<rect x="489" y="374" width="8" height="1" fill="#900404"/>
<line x1="470.5" y1="392.5" x2="489" y2="400.5" stroke="#900404" stroke-width="1.1" stroke-linecap="round"/>
<rect x="489" y="400" width="8" height="1" fill="#900404"/>
<polygon points="488,400.2 480,398.6 481.6,395.4" fill="#900404"/>
<text x="438" y="371.8" font-size="6.4" font-weight="bold" fill="#8A0000" stroke="#8A0000" stroke-width="0.3" text-anchor="start">A</text>
<text x="438" y="405.8" font-size="6.4" font-weight="bold" fill="#8A0000" stroke="#8A0000" stroke-width="0.3" text-anchor="start">K</text>
<text x="493" y="371.8" font-size="6.4" font-weight="bold" fill="#8A0000" stroke="#8A0000" stroke-width="0.3" text-anchor="end">C</text>
<text x="494" y="405.8" font-size="6.4" font-weight="bold" fill="#8A0000" stroke="#8A0000" stroke-width="0.3" text-anchor="end">E</text>
<text x="426.4" y="372.4" font-size="6.8" font-weight="normal" fill="#000000" stroke="#000000" stroke-width="0.3" text-anchor="end">1</text>
<text x="426.4" y="398.4" font-size="6.8" font-weight="normal" fill="#000000" stroke="#000000" stroke-width="0.3" text-anchor="end">2</text>
<text x="505" y="372.4" font-size="6.8" font-weight="normal" fill="#000000" stroke="#000000" stroke-width="0.3" text-anchor="start">4</text>
<text x="505" y="398.4" font-size="6.8" font-weight="normal" fill="#000000" stroke="#000000" stroke-width="0.3" text-anchor="start">3</text>
<text x="434.7" y="364.2" font-size="10.6" font-weight="normal" fill="#000000" stroke="#000000" stroke-width="0.2" text-anchor="start">U3</text>
<text x="435.4" y="413.6" font-size="6.4" font-weight="bold" fill="#000000" stroke="#000000" stroke-width="0.3" text-anchor="start" textLength="26.4" lengthAdjust="spacingAndGlyphs">PC817A</text>
<text x="435" y="422.6" font-size="6.4" font-weight="normal" fill="#74747A" stroke="#74747A" stroke-width="0.3" text-anchor="start" textLength="26" lengthAdjust="spacingAndGlyphs">&lt;TEXT&gt;</text>
<rect x="693" y="125" width="1" height="10" fill="#900404"/>
<rect x="693" y="168" width="1" height="10" fill="#900404"/>
<rect x="667" y="151" width="9" height="1" fill="#900404"/>
<rect x="675.5" y="138.5" width="5" height="26" fill="#D0D0B8" stroke="#8A0000" stroke-width="1" shape-rendering="crispEdges"/>
<line x1="681" y1="147.5" x2="693.5" y2="134.5" stroke="#900404" stroke-width="1.05" stroke-linecap="round"/>
<line x1="681" y1="155.5" x2="693.5" y2="168.5" stroke="#900404" stroke-width="1.05" stroke-linecap="round"/>
<polygon points="693.5,168.5 685.161,164.588 689.918,160.014" fill="#D0D0B8" stroke="#900404" stroke-width="1.05" stroke-linejoin="round"/>
<text x="696.6" y="143.6" font-size="10.6" font-weight="normal" fill="#000000" stroke="#000000" stroke-width="0.2" text-anchor="start">Q2</text>
<text x="696.8" y="151.7" font-size="6.4" font-weight="bold" fill="#000000" stroke="#000000" stroke-width="0.3" text-anchor="start" textLength="28.7" lengthAdjust="spacingAndGlyphs">2SC2547</text>
<text x="696.8" y="160.6" font-size="6.4" font-weight="normal" fill="#74747A" stroke="#74747A" stroke-width="0.3" text-anchor="start" textLength="26" lengthAdjust="spacingAndGlyphs">&lt;TEXT&gt;</text>
<rect x="744" y="177" width="1" height="9" fill="#900404"/>
<rect x="744" y="220" width="1" height="9" fill="#900404"/>
<rect x="718" y="203" width="10" height="1" fill="#900404"/>
<rect x="727.5" y="190.5" width="4" height="26" fill="#D0D0B8" stroke="#8A0000" stroke-width="1" shape-rendering="crispEdges"/>
<line x1="732" y1="198.5" x2="744.5" y2="185.5" stroke="#900404" stroke-width="1.05" stroke-linecap="round"/>
<line x1="732" y1="207.5" x2="744.5" y2="220.5" stroke="#900404" stroke-width="1.05" stroke-linecap="round"/>
<polygon points="744.5,220.5 736.161,216.588 740.918,212.014" fill="#D0D0B8" stroke="#900404" stroke-width="1.05" stroke-linejoin="round"/>
<text x="748.7" y="195.9" font-size="10.6" font-weight="normal" fill="#000000" stroke="#000000" stroke-width="0.2" text-anchor="start">Q9</text>
<text x="748.9" y="203.5" font-size="6.4" font-weight="bold" fill="#000000" stroke="#000000" stroke-width="0.3" text-anchor="start" textLength="24" lengthAdjust="spacingAndGlyphs">TIP122</text>
<text x="748.9" y="211.6" font-size="6.4" font-weight="normal" fill="#74747A" stroke="#74747A" stroke-width="0.3" text-anchor="start" textLength="26" lengthAdjust="spacingAndGlyphs">&lt;TEXT&gt;</text>
<rect x="650" y="271" width="1" height="9" fill="#900404"/>
<rect x="650" y="314" width="1" height="9" fill="#900404"/>
<rect x="624" y="296" width="9" height="1" fill="#900404"/>
<rect x="632.5" y="283.5" width="5" height="26" fill="#D0D0B8" stroke="#8A0000" stroke-width="1" shape-rendering="crispEdges"/>
<line x1="638" y1="292.5" x2="650.5" y2="279.5" stroke="#900404" stroke-width="1.05" stroke-linecap="round"/>
<line x1="638" y1="301.5" x2="650.5" y2="314.5" stroke="#900404" stroke-width="1.05" stroke-linecap="round"/>
<polygon points="650.5,314.5 642.161,310.588 646.918,306.014" fill="#D0D0B8" stroke="#900404" stroke-width="1.05" stroke-linejoin="round"/>
<text x="653.8" y="289.2" font-size="10.6" font-weight="normal" fill="#000000" stroke="#000000" stroke-width="0.2" text-anchor="start">Q1</text>
<text x="654" y="296.5" font-size="6.4" font-weight="bold" fill="#000000" stroke="#000000" stroke-width="0.3" text-anchor="start" textLength="28.7" lengthAdjust="spacingAndGlyphs">2SC2547</text>
<text x="654" y="305.6" font-size="6.4" font-weight="normal" fill="#74747A" stroke="#74747A" stroke-width="0.3" text-anchor="start" textLength="26" lengthAdjust="spacingAndGlyphs">&lt;TEXT&gt;</text>
<rect x="744" y="288" width="1" height="9" fill="#900404"/>
<rect x="744" y="331" width="1" height="9" fill="#900404"/>
<rect x="718" y="314" width="10" height="1" fill="#900404"/>
<rect x="727.5" y="301.5" width="4" height="25" fill="#D0D0B8" stroke="#8A0000" stroke-width="1" shape-rendering="crispEdges"/>
<line x1="732" y1="309.5" x2="744.5" y2="296.5" stroke="#900404" stroke-width="1.05" stroke-linecap="round"/>
<line x1="732" y1="318.5" x2="744.5" y2="331.5" stroke="#900404" stroke-width="1.05" stroke-linecap="round"/>
<polygon points="732,309.5 735.582,301.014 740.339,305.588" fill="#D0D0B8" stroke="#900404" stroke-width="1.05" stroke-linejoin="round"/>
<text x="748.7" y="307.4" font-size="10.6" font-weight="normal" fill="#000000" stroke="#000000" stroke-width="0.2" text-anchor="start">Q3</text>
<text x="748.9" y="314.8" font-size="6.4" font-weight="bold" fill="#000000" stroke="#000000" stroke-width="0.3" text-anchor="start" textLength="20" lengthAdjust="spacingAndGlyphs">TIP32</text>
<text x="748.9" y="323.6" font-size="6.4" font-weight="normal" fill="#74747A" stroke="#74747A" stroke-width="0.3" text-anchor="start" textLength="26" lengthAdjust="spacingAndGlyphs">&lt;TEXT&gt;</text>
<rect x="916" y="117" width="1" height="9" fill="#900404"/>
<rect x="916" y="160" width="1" height="9" fill="#900404"/>
<rect x="933" y="142" width="10" height="1" fill="#900404"/>
<rect x="929.5" y="130.5" width="4" height="25" fill="#D0D0B8" stroke="#8A0000" stroke-width="1" shape-rendering="crispEdges"/>
<line x1="929" y1="138.5" x2="916.5" y2="125.5" stroke="#900404" stroke-width="1.05" stroke-linecap="round"/>
<line x1="929" y1="147.5" x2="916.5" y2="160.5" stroke="#900404" stroke-width="1.05" stroke-linecap="round"/>
<polygon points="916.5,160.5 920.082,152.014 924.839,156.588" fill="#D0D0B8" stroke="#900404" stroke-width="1.05" stroke-linejoin="round"/>
<text x="933.7" y="115.3" font-size="10.6" font-weight="normal" fill="#000000" stroke="#000000" stroke-width="0.2" text-anchor="start">Q5</text>
<text x="934.5" y="175.1" font-size="6.4" font-weight="bold" fill="#000000" stroke="#000000" stroke-width="0.3" text-anchor="start" textLength="28.7" lengthAdjust="spacingAndGlyphs">2SC2547</text>
<text x="934.5" y="184.1" font-size="6.4" font-weight="normal" fill="#74747A" stroke="#74747A" stroke-width="0.3" text-anchor="start" textLength="26" lengthAdjust="spacingAndGlyphs">&lt;TEXT&gt;</text>
<rect x="865" y="177" width="1" height="9" fill="#900404"/>
<rect x="865" y="220" width="1" height="9" fill="#900404"/>
<rect x="882" y="203" width="9" height="1" fill="#900404"/>
<rect x="877.5" y="190.5" width="5" height="26" fill="#D0D0B8" stroke="#8A0000" stroke-width="1" shape-rendering="crispEdges"/>
<line x1="877" y1="198.5" x2="865.5" y2="185.5" stroke="#900404" stroke-width="1.05" stroke-linecap="round"/>
<line x1="877" y1="207.5" x2="865.5" y2="220.5" stroke="#900404" stroke-width="1.05" stroke-linecap="round"/>
<polygon points="865.5,220.5 868.726,211.872 873.67,216.245" fill="#D0D0B8" stroke="#900404" stroke-width="1.05" stroke-linejoin="round"/>
<text x="881.5" y="175" font-size="10.6" font-weight="normal" fill="#000000" stroke="#000000" stroke-width="0.2" text-anchor="start">Q10</text>
<text x="882.2" y="233.7" font-size="6.4" font-weight="bold" fill="#000000" stroke="#000000" stroke-width="0.3" text-anchor="start" textLength="24" lengthAdjust="spacingAndGlyphs">TIP122</text>
<text x="882.2" y="242.8" font-size="6.4" font-weight="normal" fill="#74747A" stroke="#74747A" stroke-width="0.3" text-anchor="start" textLength="26" lengthAdjust="spacingAndGlyphs">&lt;TEXT&gt;</text>
<rect x="865" y="288" width="1" height="9" fill="#900404"/>
<rect x="865" y="331" width="1" height="9" fill="#900404"/>
<rect x="882" y="314" width="9" height="1" fill="#900404"/>
<rect x="877.5" y="301.5" width="5" height="25" fill="#D0D0B8" stroke="#8A0000" stroke-width="1" shape-rendering="crispEdges"/>
<line x1="877" y1="309.5" x2="865.5" y2="296.5" stroke="#900404" stroke-width="1.05" stroke-linecap="round"/>
<line x1="877" y1="318.5" x2="865.5" y2="331.5" stroke="#900404" stroke-width="1.05" stroke-linecap="round"/>
<polygon points="877,309.5 868.83,305.245 873.774,300.872" fill="#D0D0B8" stroke="#900404" stroke-width="1.05" stroke-linejoin="round"/>
<text x="881.5" y="286.1" font-size="10.6" font-weight="normal" fill="#000000" stroke="#000000" stroke-width="0.2" text-anchor="start">Q4</text>
<text x="882.7" y="346" font-size="6.4" font-weight="bold" fill="#000000" stroke="#000000" stroke-width="0.3" text-anchor="start" textLength="20" lengthAdjust="spacingAndGlyphs">TIP32</text>
<text x="882.7" y="355" font-size="6.4" font-weight="normal" fill="#74747A" stroke="#74747A" stroke-width="0.3" text-anchor="start" textLength="26" lengthAdjust="spacingAndGlyphs">&lt;TEXT&gt;</text>
<rect x="916" y="305" width="1" height="10" fill="#900404"/>
<rect x="916" y="348" width="1" height="10" fill="#900404"/>
<rect x="933" y="331" width="10" height="1" fill="#900404"/>
<rect x="929.5" y="318.5" width="4" height="26" fill="#D0D0B8" stroke="#8A0000" stroke-width="1" shape-rendering="crispEdges"/>
<line x1="929" y1="326.5" x2="916.5" y2="314.5" stroke="#900404" stroke-width="1.05" stroke-linecap="round"/>
<line x1="929" y1="335.5" x2="916.5" y2="348.5" stroke="#900404" stroke-width="1.05" stroke-linecap="round"/>
<polygon points="916.5,348.5 920.082,340.014 924.839,344.588" fill="#D0D0B8" stroke="#900404" stroke-width="1.05" stroke-linejoin="round"/>
<text x="934.3" y="303.4" font-size="10.6" font-weight="normal" fill="#000000" stroke="#000000" stroke-width="0.2" text-anchor="start">Q6</text>
<text x="934.2" y="363.5" font-size="6.4" font-weight="bold" fill="#000000" stroke="#000000" stroke-width="0.3" text-anchor="start" textLength="28.7" lengthAdjust="spacingAndGlyphs">2SC2547</text>
<text x="934.2" y="372.1" font-size="6.4" font-weight="normal" fill="#74747A" stroke="#74747A" stroke-width="0.3" text-anchor="start" textLength="26" lengthAdjust="spacingAndGlyphs">&lt;TEXT&gt;</text>
<rect x="779" y="253" width="11" height="1" fill="#900404"/>
<rect x="820" y="253" width="11" height="1" fill="#900404"/>
<circle cx="804.5" cy="253.5" r="16.5" fill="#C8C8C8" stroke="#900404" stroke-width="1"/>
<circle cx="804.5" cy="253.5" r="4" fill="#E0E0D0" stroke="#900404" stroke-width="1"/>
<path d="M795.378,262.622 A12.9,12.9 0 0 0 813.622,262.622 L810.369,259.369 A8.3,8.3 0 0 1 798.631,259.369 Z" fill="#C8C8C8" stroke="#900404" stroke-width="1"/>
<path d="M795.378,244.378 A12.9,12.9 0 0 1 813.622,244.378 L810.369,247.631 A8.3,8.3 0 0 0 798.631,247.631 Z" fill="#C8C8C8" stroke="#900404" stroke-width="1"/>
<rect x="792.6" y="272.5" width="23.6" height="8.8" fill="#004000" stroke="#00E000" stroke-width="1.2"/>
<text x="804.3" y="279.4" font-size="5.6" font-weight="bold" fill="#00A000" stroke="#00A000" stroke-width="0.3" text-anchor="middle" textLength="18" lengthAdjust="spacingAndGlyphs">+88.8</text>
<circle cx="825.5" cy="305.5" r="3" fill="none" stroke="#004800" stroke-width="1"/>
<text x="815.8" y="307.2" font-size="6.4" font-weight="bold" fill="#000000" stroke="#000000" stroke-width="0.3" text-anchor="end" textLength="24.5" lengthAdjust="spacingAndGlyphs">MOTOR</text>
<circle cx="349.5" cy="353.5" r="3" fill="none" stroke="#004800" stroke-width="1"/>
<text transform="translate(352.2,377.2) rotate(-90)" font-size="6.4" font-weight="bold" fill="#000000" textLength="16.5" lengthAdjust="spacingAndGlyphs">PWM</text>
<rect x="564.5" y="434.5" width="77" height="69" fill="#C8C8AA" stroke="#8A0000" stroke-width="1" shape-rendering="crispEdges"/>
<rect x="546" y="443" width="19" height="1" fill="#900404"/>
<rect x="512" y="443" width="35" height="1" fill="#004800"/>
<circle cx="508.5" cy="443.5" r="3" fill="none" stroke="#004800" stroke-width="1"/>
<text x="568.3" y="444.9" font-size="6.4" font-weight="bold" fill="#000000" stroke="#000000" stroke-width="0.3" text-anchor="start">A</text>
<text x="500" y="445.4" font-size="6.4" font-weight="bold" fill="#000000" stroke="#000000" stroke-width="0.3" text-anchor="end" textLength="16.5" lengthAdjust="spacingAndGlyphs">PWM</text>
<rect x="546" y="460" width="19" height="1" fill="#900404"/>
<rect x="512" y="460" width="35" height="1" fill="#004800"/>
<circle cx="508.5" cy="460.5" r="3" fill="none" stroke="#004800" stroke-width="1"/>
<text x="568.3" y="461.9" font-size="6.4" font-weight="bold" fill="#000000" stroke="#000000" stroke-width="0.3" text-anchor="start">B</text>
<text x="500" y="462.4" font-size="6.4" font-weight="bold" fill="#000000" stroke="#000000" stroke-width="0.3" text-anchor="end" textLength="25" lengthAdjust="spacingAndGlyphs">MOTOR</text>
<rect x="546" y="477" width="19" height="1" fill="#900404"/>
<rect x="512" y="477" width="35" height="1" fill="#004800"/>
<circle cx="508.5" cy="477.5" r="3" fill="none" stroke="#004800" stroke-width="1"/>
<text x="568.3" y="478.9" font-size="6.4" font-weight="bold" fill="#000000" stroke="#000000" stroke-width="0.3" text-anchor="start">C</text>
<text x="500" y="479.4" font-size="6.4" font-weight="bold" fill="#000000" stroke="#000000" stroke-width="0.3" text-anchor="end" textLength="7.8" lengthAdjust="spacingAndGlyphs">B1</text>
<rect x="546" y="494" width="19" height="1" fill="#900404"/>
<rect x="512" y="494" width="35" height="1" fill="#004800"/>
<circle cx="508.5" cy="494.5" r="3" fill="none" stroke="#004800" stroke-width="1"/>
<text x="568.3" y="495.9" font-size="6.4" font-weight="bold" fill="#000000" stroke="#000000" stroke-width="0.3" text-anchor="start">D</text>
<rect x="585" y="447" width="48" height="44" fill="#000000"/>
<rect x="585.9" y="447.9" width="3.2" height="3.2" fill="#063C06"/>
<rect x="585.9" y="451.9" width="3.2" height="3.2" fill="#063C06"/>
<rect x="585.9" y="455.9" width="3.2" height="3.2" fill="#063C06"/>
<rect x="585.9" y="459.9" width="3.2" height="3.2" fill="#063C06"/>
<rect x="585.9" y="463.9" width="3.2" height="3.2" fill="#063C06"/>
<rect x="585.9" y="467.9" width="3.2" height="3.2" fill="#063C06"/>
<rect x="585.9" y="471.9" width="3.2" height="3.2" fill="#063C06"/>
<rect x="585.9" y="475.9" width="3.2" height="3.2" fill="#063C06"/>
<rect x="585.9" y="479.9" width="3.2" height="3.2" fill="#063C06"/>
<rect x="585.9" y="483.9" width="3.2" height="3.2" fill="#063C06"/>
<rect x="585.9" y="487.9" width="3.2" height="3.2" fill="#063C06"/>
<rect x="589.9" y="447.9" width="3.2" height="3.2" fill="#063C06"/>
<rect x="589.9" y="451.9" width="3.2" height="3.2" fill="#063C06"/>
<rect x="589.9" y="455.9" width="3.2" height="3.2" fill="#063C06"/>
<rect x="589.9" y="459.9" width="3.2" height="3.2" fill="#063C06"/>
<rect x="589.9" y="463.9" width="3.2" height="3.2" fill="#063C06"/>
<rect x="589.9" y="467.9" width="3.2" height="3.2" fill="#063C06"/>
<rect x="589.9" y="471.9" width="3.2" height="3.2" fill="#063C06"/>
<rect x="589.9" y="475.9" width="3.2" height="3.2" fill="#063C06"/>
<rect x="589.9" y="479.9" width="3.2" height="3.2" fill="#063C06"/>
<rect x="589.9" y="483.9" width="3.2" height="3.2" fill="#063C06"/>
<rect x="589.9" y="487.9" width="3.2" height="3.2" fill="#063C06"/>
<rect x="593.9" y="447.9" width="3.2" height="3.2" fill="#063C06"/>
<rect x="593.9" y="451.9" width="3.2" height="3.2" fill="#063C06"/>
<rect x="593.9" y="455.9" width="3.2" height="3.2" fill="#063C06"/>
<rect x="593.9" y="459.9" width="3.2" height="3.2" fill="#063C06"/>
<rect x="593.9" y="463.9" width="3.2" height="3.2" fill="#063C06"/>
<rect x="593.9" y="467.9" width="3.2" height="3.2" fill="#063C06"/>
<rect x="593.9" y="471.9" width="3.2" height="3.2" fill="#063C06"/>
<rect x="593.9" y="475.9" width="3.2" height="3.2" fill="#063C06"/>
<rect x="593.9" y="479.9" width="3.2" height="3.2" fill="#063C06"/>
<rect x="593.9" y="483.9" width="3.2" height="3.2" fill="#063C06"/>
<rect x="593.9" y="487.9" width="3.2" height="3.2" fill="#063C06"/>
<rect x="597.9" y="447.9" width="3.2" height="3.2" fill="#063C06"/>
<rect x="597.9" y="451.9" width="3.2" height="3.2" fill="#063C06"/>
<rect x="597.9" y="455.9" width="3.2" height="3.2" fill="#063C06"/>
<rect x="597.9" y="459.9" width="3.2" height="3.2" fill="#063C06"/>
<rect x="597.9" y="463.9" width="3.2" height="3.2" fill="#063C06"/>
<rect x="597.9" y="467.9" width="3.2" height="3.2" fill="#063C06"/>
<rect x="597.9" y="471.9" width="3.2" height="3.2" fill="#063C06"/>
<rect x="597.9" y="475.9" width="3.2" height="3.2" fill="#063C06"/>
<rect x="597.9" y="479.9" width="3.2" height="3.2" fill="#063C06"/>
<rect x="597.9" y="483.9" width="3.2" height="3.2" fill="#063C06"/>
<rect x="597.9" y="487.9" width="3.2" height="3.2" fill="#063C06"/>
<rect x="601.9" y="447.9" width="3.2" height="3.2" fill="#063C06"/>
<rect x="601.9" y="451.9" width="3.2" height="3.2" fill="#063C06"/>
<rect x="601.9" y="455.9" width="3.2" height="3.2" fill="#063C06"/>
<rect x="601.9" y="459.9" width="3.2" height="3.2" fill="#063C06"/>
<rect x="601.9" y="463.9" width="3.2" height="3.2" fill="#063C06"/>
<rect x="601.9" y="467.9" width="3.2" height="3.2" fill="#063C06"/>
<rect x="601.9" y="471.9" width="3.2" height="3.2" fill="#063C06"/>
<rect x="601.9" y="475.9" width="3.2" height="3.2" fill="#063C06"/>
<rect x="601.9" y="479.9" width="3.2" height="3.2" fill="#063C06"/>
<rect x="601.9" y="483.9" width="3.2" height="3.2" fill="#063C06"/>
<rect x="601.9" y="487.9" width="3.2" height="3.2" fill="#063C06"/>
<rect x="605.9" y="447.9" width="3.2" height="3.2" fill="#063C06"/>
<rect x="605.9" y="451.9" width="3.2" height="3.2" fill="#063C06"/>
<rect x="605.9" y="455.9" width="3.2" height="3.2" fill="#063C06"/>
<rect x="605.9" y="459.9" width="3.2" height="3.2" fill="#063C06"/>
<rect x="605.9" y="463.9" width="3.2" height="3.2" fill="#063C06"/>
<rect x="605.9" y="467.9" width="3.2" height="3.2" fill="#063C06"/>
<rect x="605.9" y="471.9" width="3.2" height="3.2" fill="#063C06"/>
<rect x="605.9" y="475.9" width="3.2" height="3.2" fill="#063C06"/>
<rect x="605.9" y="479.9" width="3.2" height="3.2" fill="#063C06"/>
<rect x="605.9" y="483.9" width="3.2" height="3.2" fill="#063C06"/>
<rect x="605.9" y="487.9" width="3.2" height="3.2" fill="#063C06"/>
<rect x="609.9" y="447.9" width="3.2" height="3.2" fill="#063C06"/>
<rect x="609.9" y="451.9" width="3.2" height="3.2" fill="#063C06"/>
<rect x="609.9" y="455.9" width="3.2" height="3.2" fill="#063C06"/>
<rect x="609.9" y="459.9" width="3.2" height="3.2" fill="#063C06"/>
<rect x="609.9" y="463.9" width="3.2" height="3.2" fill="#063C06"/>
<rect x="609.9" y="467.9" width="3.2" height="3.2" fill="#063C06"/>
<rect x="609.9" y="471.9" width="3.2" height="3.2" fill="#063C06"/>
<rect x="609.9" y="475.9" width="3.2" height="3.2" fill="#063C06"/>
<rect x="609.9" y="479.9" width="3.2" height="3.2" fill="#063C06"/>
<rect x="609.9" y="483.9" width="3.2" height="3.2" fill="#063C06"/>
<rect x="609.9" y="487.9" width="3.2" height="3.2" fill="#063C06"/>
<rect x="613.9" y="447.9" width="3.2" height="3.2" fill="#063C06"/>
<rect x="613.9" y="451.9" width="3.2" height="3.2" fill="#063C06"/>
<rect x="613.9" y="455.9" width="3.2" height="3.2" fill="#063C06"/>
<rect x="613.9" y="459.9" width="3.2" height="3.2" fill="#063C06"/>
<rect x="613.9" y="463.9" width="3.2" height="3.2" fill="#063C06"/>
<rect x="613.9" y="467.9" width="3.2" height="3.2" fill="#063C06"/>
<rect x="613.9" y="471.9" width="3.2" height="3.2" fill="#063C06"/>
<rect x="613.9" y="475.9" width="3.2" height="3.2" fill="#063C06"/>
<rect x="613.9" y="479.9" width="3.2" height="3.2" fill="#063C06"/>
<rect x="613.9" y="483.9" width="3.2" height="3.2" fill="#063C06"/>
<rect x="613.9" y="487.9" width="3.2" height="3.2" fill="#063C06"/>
<rect x="617.9" y="447.9" width="3.2" height="3.2" fill="#063C06"/>
<rect x="617.9" y="451.9" width="3.2" height="3.2" fill="#063C06"/>
<rect x="617.9" y="455.9" width="3.2" height="3.2" fill="#063C06"/>
<rect x="617.9" y="459.9" width="3.2" height="3.2" fill="#063C06"/>
<rect x="617.9" y="463.9" width="3.2" height="3.2" fill="#063C06"/>
<rect x="617.9" y="467.9" width="3.2" height="3.2" fill="#063C06"/>
<rect x="617.9" y="471.9" width="3.2" height="3.2" fill="#063C06"/>
<rect x="617.9" y="475.9" width="3.2" height="3.2" fill="#063C06"/>
<rect x="617.9" y="479.9" width="3.2" height="3.2" fill="#063C06"/>
<rect x="617.9" y="483.9" width="3.2" height="3.2" fill="#063C06"/>
<rect x="617.9" y="487.9" width="3.2" height="3.2" fill="#063C06"/>
<rect x="621.9" y="447.9" width="3.2" height="3.2" fill="#063C06"/>
<rect x="621.9" y="451.9" width="3.2" height="3.2" fill="#063C06"/>
<rect x="621.9" y="455.9" width="3.2" height="3.2" fill="#063C06"/>
<rect x="621.9" y="459.9" width="3.2" height="3.2" fill="#063C06"/>
<rect x="621.9" y="463.9" width="3.2" height="3.2" fill="#063C06"/>
<rect x="621.9" y="467.9" width="3.2" height="3.2" fill="#063C06"/>
<rect x="621.9" y="471.9" width="3.2" height="3.2" fill="#063C06"/>
<rect x="621.9" y="475.9" width="3.2" height="3.2" fill="#063C06"/>
<rect x="621.9" y="479.9" width="3.2" height="3.2" fill="#063C06"/>
<rect x="621.9" y="483.9" width="3.2" height="3.2" fill="#063C06"/>
<rect x="621.9" y="487.9" width="3.2" height="3.2" fill="#063C06"/>
<rect x="625.9" y="447.9" width="3.2" height="3.2" fill="#063C06"/>
<rect x="625.9" y="451.9" width="3.2" height="3.2" fill="#063C06"/>
<rect x="625.9" y="455.9" width="3.2" height="3.2" fill="#063C06"/>
<rect x="625.9" y="459.9" width="3.2" height="3.2" fill="#063C06"/>
<rect x="625.9" y="463.9" width="3.2" height="3.2" fill="#063C06"/>
<rect x="625.9" y="467.9" width="3.2" height="3.2" fill="#063C06"/>
<rect x="625.9" y="471.9" width="3.2" height="3.2" fill="#063C06"/>
<rect x="625.9" y="475.9" width="3.2" height="3.2" fill="#063C06"/>
<rect x="625.9" y="479.9" width="3.2" height="3.2" fill="#063C06"/>
<rect x="625.9" y="483.9" width="3.2" height="3.2" fill="#063C06"/>
<rect x="625.9" y="487.9" width="3.2" height="3.2" fill="#063C06"/>
<rect x="629.9" y="447.9" width="3.2" height="3.2" fill="#063C06"/>
<rect x="629.9" y="451.9" width="3.2" height="3.2" fill="#063C06"/>
<rect x="629.9" y="455.9" width="3.2" height="3.2" fill="#063C06"/>
<rect x="629.9" y="459.9" width="3.2" height="3.2" fill="#063C06"/>
<rect x="629.9" y="463.9" width="3.2" height="3.2" fill="#063C06"/>
<rect x="629.9" y="467.9" width="3.2" height="3.2" fill="#063C06"/>
<rect x="629.9" y="471.9" width="3.2" height="3.2" fill="#063C06"/>
<rect x="629.9" y="475.9" width="3.2" height="3.2" fill="#063C06"/>
<rect x="629.9" y="479.9" width="3.2" height="3.2" fill="#063C06"/>
<rect x="629.9" y="483.9" width="3.2" height="3.2" fill="#063C06"/>
<rect x="629.9" y="487.9" width="3.2" height="3.2" fill="#063C06"/>
<path d="M585,455.4 L589.6,455.4 L589.6,450.4 L594.2,450.4 L594.2,455.4 L598.2,455.4 L598.2,450.4 L602.5,450.4 L602.5,455.4 L607.3,455.4 L607.3,450.4 L611.6,450.4 L611.6,455.4 L615.2,455.4 L615.2,450.4 L619.6,450.4 L619.6,455.4 L624.6,455.4 L624.6,450.4 L628.7,450.4 L628.7,455.4 L633,455.4" fill="none" stroke="#FFFF00" stroke-width="1.3" stroke-linejoin="miter"/>
<path d="M585,477.3 L589.6,477.3 L589.6,472.4 L594.2,472.4 L594.2,477.3 L598.2,477.3 L598.2,472.4 L602.5,472.4 L602.5,477.3 L607.3,477.3 L607.3,472.4 L611.6,472.4 L611.6,477.3 L615.2,477.3 L615.2,472.4 L619.6,472.4 L619.6,477.3 L624.6,477.3 L624.6,472.4 L628.7,472.4 L628.7,477.3 L633,477.3" fill="none" stroke="#FF0000" stroke-width="1.3" stroke-linejoin="miter"/>
<path d="M585,465.4 L586.4,466.4 L589.3,461.5 L593.45,466.4 L596.35,461.5 L600.5,466.4 L603.4,461.5 L607.55,466.4 L610.45,461.5 L614.6,466.4 L617.5,461.5 L621.65,466.4 L624.55,461.5 L628.7,466.4 L631.6,461.5 L632.6,463.4" fill="none" stroke="#0000FF" stroke-width="1.1" stroke-linejoin="round"/>
<path d="M585,484.6 L587.4,482.4 L590.5,486.6 L594.4,482.4 L597.5,486.6 L601.4,482.4 L604.5,486.6 L608.4,482.4 L611.5,486.6 L615.4,482.4 L618.5,486.6 L622.4,482.4 L625.5,486.6 L629.4,482.4 L631.8,486.6" fill="none" stroke="#00E000" stroke-width="1.1" stroke-linejoin="round"/>
<circle cx="521.5" cy="228.5" r="2.6" fill="none" stroke="#0000D0" stroke-width="1"/>
<line x1="516.9" y1="228.5" x2="526.1" y2="228.5" stroke="#0000D0" stroke-width="1" stroke-linecap="round"/>
<line x1="521.5" y1="223.9" x2="521.5" y2="233.1" stroke="#0000D0" stroke-width="1" stroke-linecap="round"/>
</g>
</svg>
</body></html>
